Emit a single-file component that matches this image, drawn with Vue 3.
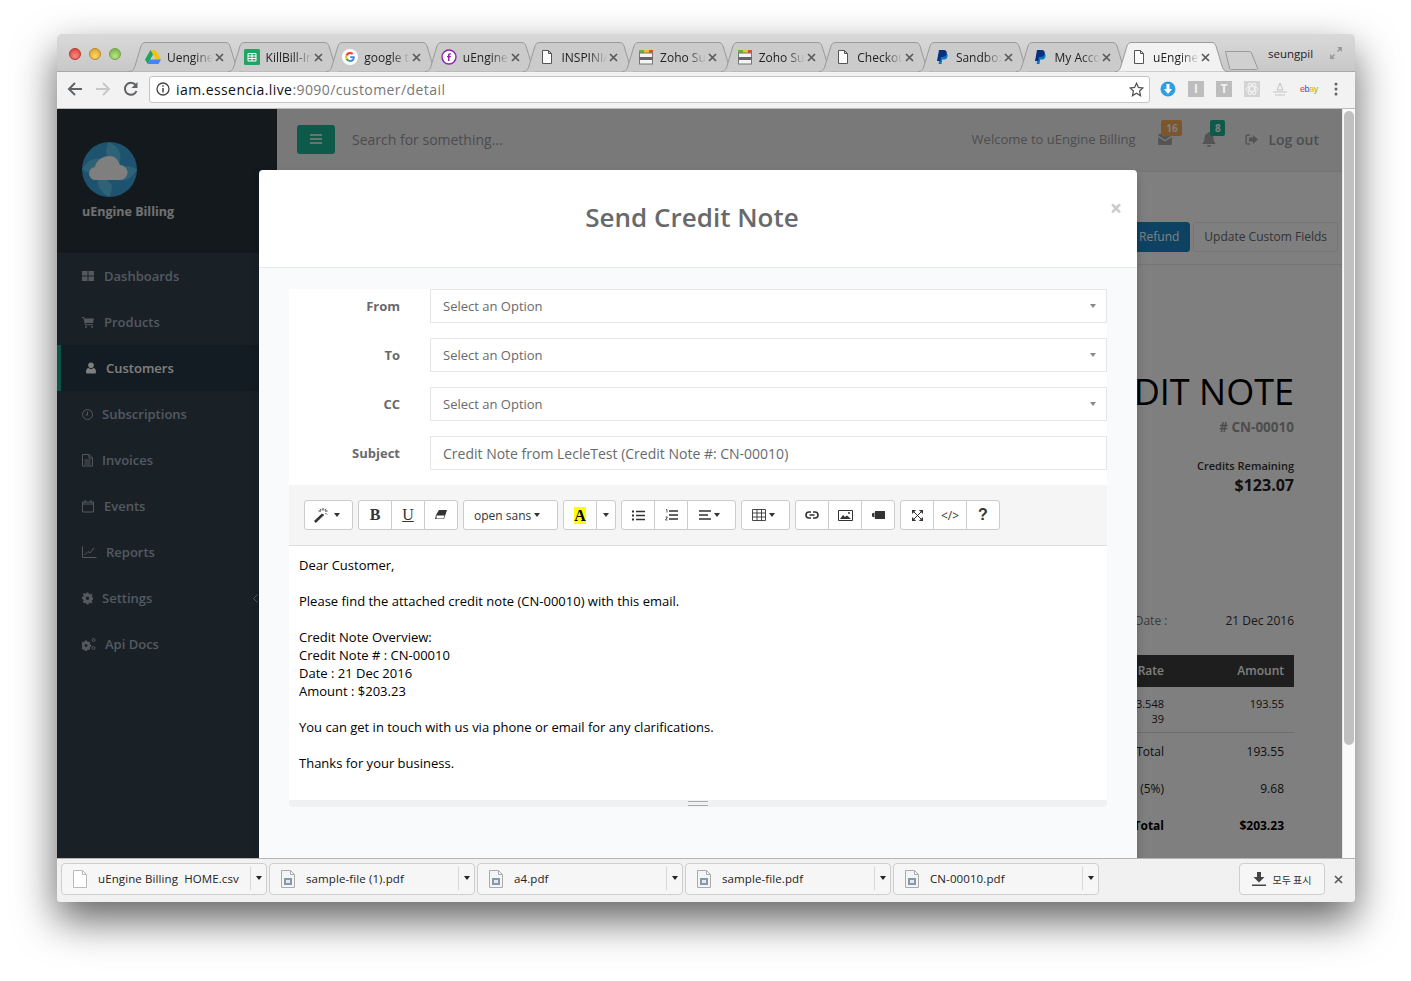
<template>
  <div class="window">
    <div class="tabstrip">
      <div class="lights">
        <span class="light red"></span>
        <span class="light yellow"></span>
        <span class="light green"></span>
      </div>
      <div class="tabs">
        <div v-for="t in tabs" :key="t.title + t.icon" class="tab" :class="{ active: t.active }">
          <svg class="tab-shape" width="113" height="30" viewBox="0 0 113 30">
            <path d="M0 29.5 C4 29.5 5 27 6 24 L12 4 C13 1.5 14 .5 17 .5 L96 .5 C99 .5 100 1.5 101 4 L107 24 C108 27 109 29.5 113 29.5" />
          </svg>
          <span class="favicon">
            <svg v-if="t.icon === 'drive'" width="16" height="16" viewBox="0 0 16 16">
              <path d="M5.5 1h5L16 10.5h-5z" fill="#f4c20d" />
              <path d="M5.5 1 8 5.4 2.7 15 0 10.5z" fill="#1fa463" />
              <path d="M5 10.5h11L13.4 15H2.7z" fill="#4285f4" />
            </svg>
            <svg v-else-if="t.icon === 'sheet'" width="16" height="16" viewBox="0 0 16 16">
              <rect width="16" height="16" rx="1.5" fill="#21a464" />
              <path d="M4 4.5h8v7.5H4zM4 7h8M4 9.5h8M8 4.5V12" fill="none" stroke="#fff" />
            </svg>
            <svg v-else-if="t.icon === 'google'" width="16" height="16" viewBox="0 0 16 16">
              <circle cx="8" cy="8" r="8" fill="#fff" />
              <path d="M12.8 8.2c0 2.8-1.9 4.8-4.7 4.8v-2c1.5 0 2.4-.8 2.7-1.9H8.1V7.3h4.6z" fill="#4285f4" />
              <path d="M8.1 13a4.9 4.9 0 0 1-4.4-2.7l1.6-1.3C5.7 10.200 6.800 11 8.100 11z" fill="#34a853" />
              <path d="M3.700 10.300a5 5 0 0 1 0-4.600l1.600 1.300a3 3 0 0 0 0 2z" fill="#fbbc05" />
              <path d="M3.700 5.700A4.900 4.900 0 0 1 11.400 4.300L10 5.700A3 3 0 0 0 5.300 7z" fill="#ea4335" />
            </svg>
            <svg v-else-if="t.icon === 'fb'" width="16" height="16" viewBox="0 0 16 16">
              <circle cx="8" cy="8" r="7" fill="#fff" stroke="#8e24aa" stroke-width="1.400" />
              <path d="M8.900 4.200c-1.300 0-1.900.7-1.900 1.900v.8H6v1.400h1V12h1.500V8.300h1.200l.2-1.400H8.500v-.6c0-.5.200-.7.700-.7h.7V4.300z" fill="#8e24aa" />
            </svg>
            <svg v-else-if="t.icon === 'doc'" width="16" height="16" viewBox="0 0 16 16">
              <path d="M3.500 1.500h6l3 3v10h-9zM9.500 1.500v3h3" fill="#fff" stroke="#555" />
            </svg>
            <svg v-else-if="t.icon === 'zoho'" width="16" height="16" viewBox="0 0 16 16">
              <path d="M1 1h5v3H1z" fill="#5fb548" />
              <path d="M6 1h5v3H6z" fill="#f2c029" />
              <path d="M11 1h4v3h-4z" fill="#e2483d" />
              <rect x="1.500" y="4" width="13" height="11" fill="#f4f4f4" stroke="#777" />
              <rect x="1.500" y="8" width="13" height="3" fill="#666" />
            </svg>
            <svg v-else width="16" height="16" viewBox="0 0 16 16">
              <path d="M6.500 4h4.500c2 0 3 1.400 2.500 3.400-.5 2.200-2 3.100-3.800 3.100H8.200L7.500 15H4.600z" fill="#0a79c4" />
              <path d="M5 1h4.500c2.500 0 3.700 1.500 3.200 3.700-.5 2.300-2 3.300-4.200 3.300H7l-.8 4H3z" fill="#0b2f7f" />
            </svg>
          </span>
          <span class="tab-title">{{ t.title }}</span>
          <svg class="tab-close" width="9" height="9" viewBox="0 0 9 9">
            <path d="M1 1l7 7M8 1 1 8" stroke="#5a5a5a" stroke-width="1.700" />
          </svg>
        </div>
        <svg class="newtab" width="34" height="20" viewBox="0 0 34 20">
          <path d="M.5 1.500h24c1 0 1.500.5 2 1.500l6 15c.3 1 0 1.500-1 1.500h-25c-1 0-1.500-.5-2-1.500L.5 1.500z" fill="#d0d0d0" stroke="#9a9a9a" />
        </svg>
      </div>
      <span class="profile">seungpil</span>
      <svg class="fullscreen" width="14" height="14" viewBox="0 0 14 14">
        <path d="M8 1h5v5zM1 8v5h5z" fill="#9a9a9a" />
        <path d="M11 3 8.500 5.500M3 11l2.500-2.500" stroke="#9a9a9a" stroke-width="1.500" />
      </svg>
    </div>

    <div class="toolbar">
      <svg class="nav-ic" width="16" height="16" viewBox="0 0 16 16">
        <path d="M15 8H2M8 2 2 8l6 6" fill="none" stroke="#5f6368" stroke-width="2" />
      </svg>
      <svg class="nav-ic" width="16" height="16" viewBox="0 0 16 16">
        <path d="M1 8h13M8 2l6 6-6 6" fill="none" stroke="#c8c8c8" stroke-width="2" />
      </svg>
      <svg class="nav-ic" width="16" height="16" viewBox="0 0 16 16">
        <path d="M13.500 10A6 6 0 1 1 12.600 4" fill="none" stroke="#5f6368" stroke-width="2" />
        <path d="M14.500 1v6h-6z" fill="#5f6368" />
      </svg>
      <div class="omnibox">
        <svg width="14" height="14" viewBox="0 0 14 14">
          <circle cx="7" cy="7" r="6" fill="none" stroke="#444" stroke-width="1.300" />
          <path d="M7 6v4.500M7 3.200v1.500" stroke="#444" stroke-width="1.500" />
        </svg>
        <span class="url"><b>iam.essencia.live</b>:9090/customer/detail</span>
        <svg class="star" width="15" height="15" viewBox="0 0 15 15">
          <path d="M7.500 1.300 9.400 5.500l4.500.5-3.300 3.100.9 4.500-4-2.300-4 2.300.9-4.500L1.100 6l4.500-.5z" fill="none" stroke="#555" stroke-width="1.300" />
        </svg>
      </div>
      <div class="extensions">
        <svg width="16" height="16" viewBox="0 0 16 16">
          <circle cx="8" cy="8" r="7.500" fill="#2e9fe0" />
          <path d="M6.500 3h3v5h2.500L8 13 4 8h2.500z" fill="#fff" />
        </svg>
        <span class="ext-box">I</span>
        <span class="ext-box">T</span>
        <svg width="16" height="16" viewBox="0 0 16 16">
          <rect width="16" height="16" fill="#d4d4d4" />
          <g fill="none" stroke="#f2f2f2">
            <ellipse cx="8" cy="8" rx="6" ry="2.500" />
            <ellipse cx="8" cy="8" rx="6" ry="2.500" transform="rotate(60 8 8)" />
            <ellipse cx="8" cy="8" rx="6" ry="2.500" transform="rotate(120 8 8)" />
          </g>
        </svg>
        <svg width="16" height="16" viewBox="0 0 16 16">
          <path d="M8 2 11 9H5z" fill="none" stroke="#c4c4c4" />
          <path d="M1 11h14M3 14h10" stroke="#c4c4c4" />
        </svg>
        <span class="ebay"><i class="e1">e</i><i class="e2">b</i><i class="e3">a</i><i class="e4">y</i></span>
        <svg class="dots" width="4" height="16" viewBox="0 0 4 16">
          <circle cx="2" cy="3" r="1.500" fill="#5f6368" />
          <circle cx="2" cy="8" r="1.500" fill="#5f6368" />
          <circle cx="2" cy="13" r="1.500" fill="#5f6368" />
        </svg>
      </div>
    </div>

    <div class="viewport-row">
      <div class="viewport">
        <div class="app">
          <aside class="sidebar">
            <div class="brand">
              <svg class="logo" width="55" height="55" viewBox="0 0 55 55">
                <circle cx="27.500" cy="27.500" r="27.500" fill="#3aa6dc" />
                <path d="M27 0c12 6 14 15 9 24L24 12C24 7 25 3 27 0z" fill="#5cc4ee" />
                <path d="M55 28c-7 11-16 13-24 8l12-12c5 0 9 1 12 4z" fill="#5cc4ee" />
                <path d="M27 55c-11-6-14-15-9-24l12 12c0 5-1 9-3 12z" fill="#5cc4ee" />
                <path d="M0 27c7-11 16-13 24-8L12 31c-5 0-9-1-12-4z" fill="#5cc4ee" />
                <path d="M14 38a6.500 6.500 0 0 1-1-13c1-6 7-11 14-11s9 4 11 9a7.500 7.500 0 0 1 0 15z" fill="#fff" />
              </svg>
              <div class="brand-name">uEngine Billing</div>
            </div>
            <nav class="menu">
              <a v-for="m in menu" :key="m.label" class="menu-item" :class="{ current: m.current }">
                <svg :width="m.w" height="14" :viewBox="`0 0 ${m.w} 14`" class="menu-ic">
                  <path v-if="m.fill" :d="m.fill" fill="currentColor" fill-rule="evenodd" />
                  <path v-if="m.line" :d="m.line" fill="none" stroke="currentColor" />
                </svg>
                {{ m.label }}
                <svg v-if="m.arrow" class="menu-arrow" width="5" height="9" viewBox="0 0 5 9">
                  <path d="M4.500 .5.500 4.500l4 4" fill="none" stroke="currentColor" />
                </svg>
              </a>
            </nav>
          </aside>

          <main class="page">
            <header class="topbar">
              <button class="burger">
                <svg width="12" height="10" viewBox="0 0 12 10">
                  <path d="M0 1h12M0 5h12M0 9h12" stroke="#fff" stroke-width="1.700" />
                </svg>
              </button>
              <span class="search">Search for something...</span>
              <span class="welcome">Welcome to uEngine Billing</span>
              <span class="top-ic mail">
                <svg width="14" height="11" viewBox="0 0 15 12">
                  <path d="M1.500 0h12c.8 0 1.500.6 1.500 1.300L7.500 6.500 0 1.300C0 .6.700 0 1.500 0zM0 3.200l7.500 5 7.500-5v7.300c0 .8-.7 1.500-1.500 1.500h-12C.7 12 0 11.300 0 10.500z" fill="#a8a8a8" />
                </svg>
                <span class="badge orange">16</span>
              </span>
              <span class="top-ic bell">
                <svg width="14" height="15" viewBox="0 0 14 15">
                  <path d="M7 0a1 1 0 0 1 1 1c2.500.5 3.500 2.500 3.500 5 0 3 1 4.500 2.500 6H0c1.500-1.500 2.500-3 2.500-6 0-2.500 1-4.500 3.500-5a1 1 0 0 1 1-1zM5 13h4a2 2 0 0 1-4 0z" fill="#a8a8a8" />
                </svg>
                <span class="badge teal">8</span>
              </span>
              <span class="logout">
                <svg width="13" height="11" viewBox="0 0 13 11">
                  <path d="M5 1H2.500C1.500 1 1 1.500 1 2.500v6C1 9.500 1.500 10 2.500 10H5" fill="none" stroke="#a8a8a8" stroke-width="1.500" />
                  <path d="M8 1l5 4.500L8 10V7.500H4v-4h4z" fill="#a8a8a8" />
                </svg>
                Log out
              </span>
            </header>
            <div class="heading">
              <button class="btn-blue">Refund</button>
              <button class="btn-plain">Update Custom Fields</button>
            </div>
            <section class="doc">
              <h1 class="doc-title">CREDIT NOTE</h1>
              <div class="doc-no"># CN-00010</div>
              <div class="doc-credit-label">Credits Remaining</div>
              <div class="doc-credit">$123.07</div>
              <div class="doc-date"><span>Credit Note Date :</span><span>21 Dec 2016</span></div>
              <div class="doc-table">
                <div class="doc-row doc-head"><span>Rate</span><span>Amount</span></div>
                <div class="doc-row doc-item"><span>193.548<br />39</span><span>193.55</span></div>
                <div class="doc-row doc-sum first"><span>Sub Total</span><span>193.55</span></div>
                <div class="doc-row doc-sum"><span>Tax (5%)</span><span>9.68</span></div>
                <div class="doc-row doc-sum strong"><span>Total</span><span>$203.23</span></div>
              </div>
            </section>
          </main>
        </div>

        <div class="backdrop">
          <div class="modal">
            <div class="modal-head">
              <h4 class="modal-title">Send Credit Note</h4>
              <span class="modal-close">×</span>
            </div>
            <div class="modal-body">
              <div class="form">
                <div v-for="f in selects" :key="f" class="form-row">
                  <label>{{ f }}</label>
                  <div class="field select">
                    Select an Option
                    <i class="select-caret"></i>
                  </div>
                </div>
                <div class="form-row">
                  <label>Subject</label>
                  <div class="field subject">Credit Note from LecleTest (Credit Note #: CN-00010)</div>
                </div>
              </div>

              <div class="editor">
                <div class="editor-bar">
                  <div class="grp">
                    <button class="wide">
                      <svg width="17" height="15" viewBox="0 0 17 15">
                        <path d="M0 13 8 5.500l1.800 1.800L1.800 15z" fill="#333" />
                        <path d="M9 0v2.500M9 6v2M4.500 3h2.500M11 3h2.500M6 .8l1.500 1.500M12 .800 10.500 2.300M13 6.500l-1.500-1.500" stroke="#333" />
                      </svg>
                      <i class="caret"></i>
                    </button>
                  </div>
                  <div class="grp">
                    <button><b class="serif">B</b></button>
                    <button><u class="serif">U</u></button>
                    <button>
                      <svg width="12" height="11" viewBox="0 0 12 11">
                        <path d="M4 0h8L9 9H0l1-4z" fill="#333" />
                        <path d="M1.500 5.500h8L8.500 8.500h-7z" fill="#fff" />
                      </svg>
                    </button>
                  </div>
                  <div class="grp">
                    <button class="font-btn">open sans <i class="caret"></i></button>
                  </div>
                  <div class="grp">
                    <button><span class="hilite">A</span></button>
                    <button class="narrow"><i class="caret"></i></button>
                  </div>
                  <div class="grp">
                    <button>
                      <svg width="13" height="11" viewBox="0 0 13 11">
                        <path d="M4 1.500h9M4 5.500h9M4 9.500h9" stroke="#333" stroke-width="1.600" />
                        <path d="M0 .500h2v2H0zM0 4.500h2v2H0zM0 8.500h2v2H0z" fill="#333" />
                      </svg>
                    </button>
                    <button>
                      <svg width="13" height="12" viewBox="0 0 13 12">
                        <path d="M4 2h9M4 6h9M4 10h9" stroke="#333" stroke-width="1.600" />
                        <path d="M1 .5h1v3M.5 8h2l-2 3h2" fill="none" stroke="#333" stroke-width=".8" />
                      </svg>
                    </button>
                    <button class="wide">
                      <svg width="12" height="10" viewBox="0 0 12 10">
                        <path d="M0 1h12M0 5h9M0 9h12" stroke="#333" stroke-width="1.600" />
                      </svg>
                      <i class="caret"></i>
                    </button>
                  </div>
                  <div class="grp">
                    <button class="wide">
                      <svg width="14" height="12" viewBox="0 0 14 12">
                        <path d="M.5.500h13v11H.5zM.5 4h13M.5 8h13M5 .5v11M9.500 .5v11" fill="none" stroke="#333" stroke-width=".9" />
                      </svg>
                      <i class="caret"></i>
                    </button>
                  </div>
                  <div class="grp">
                    <button>
                      <svg width="14" height="8" viewBox="0 0 14 8">
                        <path d="M6 1H4a3 3 0 0 0 0 6h2M8 1h2a3 3 0 0 1 0 6H8M4.500 4h5" fill="none" stroke="#333" stroke-width="1.600" />
                      </svg>
                    </button>
                    <button>
                      <svg width="15" height="11" viewBox="0 0 15 11">
                        <path d="M.5.500h14v10H.5z" fill="none" stroke="#333" />
                        <path d="M2 9l3-4 2 2 2-1.500L13 9z" fill="#333" />
                        <circle cx="11" cy="3" r="1" fill="#333" />
                      </svg>
                    </button>
                    <button>
                      <svg width="13" height="8" viewBox="0 0 13 8">
                        <path d="M3 0h10v8H3zM0 2.500l2.500-1v5l-2.500-1z" fill="#333" />
                      </svg>
                    </button>
                  </div>
                  <div class="grp">
                    <button>
                      <svg width="11" height="11" viewBox="0 0 11 11">
                        <path d="M0 0h3.500L0 3.500zM11 0v3.500L7.500 0zM0 11V7.500L3.500 11zM11 11H7.500L11 7.500zM1.500 1.500l8 8M9.500 1.500l-8 8" fill="#333" stroke="#333" />
                      </svg>
                    </button>
                    <button class="code-btn">&lt;/&gt;</button>
                    <button class="help-btn">?</button>
                  </div>
                </div>
                <div class="editor-body">
                  <p>Dear Customer,</p>
                  <p>Please find the attached credit note (CN-00010) with this email.</p>
                  <p>Credit Note Overview:<br />Credit Note # : CN-00010<br />Date : 21 Dec 2016<br />Amount : $203.23</p>
                  <p>You can get in touch with us via phone or email for any clarifications.</p>
                  <p>Thanks for your business.</p>
                </div>
                <div class="editor-grip"><span></span></div>
              </div>
            </div>
          </div>
        </div>
      </div>
      <div class="scrollbar"><span class="thumb"></span></div>
    </div>

    <div class="downloads">
      <div v-for="(d, i) in downloads" :key="d" class="dl">
        <svg v-if="i === 0" width="14" height="18" viewBox="0 0 14 18" class="dl-ic">
          <path d="M.5.5h9l4 4v13H.5zM9.500.5v4h4" fill="#fff" stroke="#bbb" />
        </svg>
        <svg v-else width="14" height="18" viewBox="0 0 14 18" class="dl-ic">
          <path d="M.5.5h9l4 4v13H.5zM9.500.5v4h4" fill="#f4f4f4" stroke="#aaa" />
          <rect x="3" y="8" width="8" height="7" fill="#8a96ac" />
          <rect x="5" y="10" width="4" height="3" fill="#e8e8e8" />
        </svg>
        <span class="dl-name">{{ d }}</span>
        <span class="dl-arrow"><i class="caret dark"></i></span>
      </div>
      <button class="show-all">
        <svg width="14" height="14" viewBox="0 0 14 14">
          <path d="M5 0h4v5h3.500L7 10.500 1.500 5H5zM0 12.500h14V14H0z" fill="#444" />
        </svg>
        모두 표시
      </button>
      <svg class="dl-close" width="9" height="9" viewBox="0 0 9 9">
        <path d="M1 1l7 7M8 1 1 8" stroke="#5a5a5a" stroke-width="1.700" />
      </svg>
    </div>
  </div>
</template>

<script setup>
const tabs = [
  { title: 'Uengine Billing', icon: 'drive' },
  { title: 'KillBill-Invoice', icon: 'sheet' },
  { title: 'google translate', icon: 'google' },
  { title: 'uEngine Facebook', icon: 'fb' },
  { title: 'INSPINIA Admin', icon: 'doc' },
  { title: 'Zoho Subscriptions', icon: 'zoho' },
  { title: 'Zoho Subscribe', icon: 'zoho' },
  { title: 'Checkout Page', icon: 'doc' },
  { title: 'Sandbox Test', icon: 'paypal' },
  { title: 'My Account', icon: 'paypal' },
  { title: 'uEngine Billing', icon: 'doc', active: true },
]

const menu = [
  { label: 'Dashboards', w: 13, fill: 'M0 2h5.500v4.500H0zM6.500 2H12v4.500H6.500zM0 7.500h5.500V12H0zM6.500 7.500H12V12H6.500z' },
  { label: 'Products', w: 13, fill: 'M0 2h2l.5 1.500H12L11 8H3.500l.3 1.300H11v1H3L1.500 3H0zM4 11a1 1 0 1 1 0 2 1 1 0 0 1 0-2zM10 11a1 1 0 1 1 0 2 1 1 0 0 1 0-2z' },
  { label: 'Customers', w: 11, current: true, fill: 'M5 1.500a2.800 2.800 0 1 1 0 5.600 2.800 2.800 0 0 1 0-5.600zM2.500 7c.7.700 1.500 1 2.500 1s1.800-.3 2.500-1C9 7.200 10 8.500 10 11c0 1-.6 1.500-1.500 1.500h-7C.6 12.500 0 12 0 11c0-2.500 1-3.800 2.500-4z' },
  { label: 'Subscriptions', w: 11, line: 'M5.500 2.500a5 5 0 1 0 0 10 5 5 0 0 0 0-10zM5.500 4.500v3.500H3.500' },
  { label: 'Invoices', w: 11, line: 'M.5 1.500h6.500l3.500 3.500v8H.5zM7 1.500v3.500h3.500M2.500 7h6M2.500 9h6M2.500 11h6' },
  { label: 'Events', w: 13, line: 'M.5 3h11v10H.5zM3 1v3M9 1v3M.5 5h11' },
  { label: 'Reports', w: 15, line: 'M.5 1.500v11h14M2.500 10l3.500-3.500 2 1.500 4-5' },
  { label: 'Settings', w: 11, arrow: true, fill: 'M4.500 1.500h2l.3 1.400 1.100.5 1.200-.8 1.400 1.400-.8 1.200.5 1.100 1.300.3v2l-1.300.3-.5 1.100.8 1.200-1.400 1.400-1.200-.8-1.100.5-.3 1.300h-2l-.3-1.300-1.100-.5-1.200.8L.9 10.700l.8-1.200-.5-1.100L0 8V6l1.200-.3.500-1.100-.8-1.200L2.300 2l1.200.8 1.100-.5zM5.500 5.500a1.700 1.700 0 1 0 0 3.400 1.700 1.700 0 0 0 0-3.400z' },
  { label: 'Api Docs', w: 14, fill: 'M3 3.500h2l.2 1 .9.400.9-.5 1.300 1.300-.5.900.4.900 1 .2v2l-1 .2-.4.900.5.900-1.300 1.300-.9-.5-.9.400-.2 1H3l-.2-1-.9-.4-.9.5L-.3 11l.5-.9-.2-.6V6.800l.2-.2-.5-.9L1 4.400l.9.5.9-.4zM4 7a1.500 1.500 0 1 0 0 3 1.500 1.500 0 0 0 0-3z', line: 'M11.500 1.500a1.500 1.500 0 1 0 0 3 1.500 1.500 0 0 0 0-3zM11.500 9.500a1.500 1.500 0 1 0 0 3 1.500 1.500 0 0 0 0-3z' },
]

const selects = ['From', 'To', 'CC']

const downloads = ['uEngine Billing  HOME.csv', 'sample-file (1).pdf', 'a4.pdf', 'sample-file.pdf', 'CN-00010.pdf']
</script>

<style>
html,
body {
  margin: 0;
  background: #fff;
}
</style>

<style scoped>
.window {
  width: 1298px;
  height: 868px;
  margin: 34px 0 79px 57px;
  display: flex;
  flex-direction: column;
  border-radius: 5px 5px 4px 4px;
  overflow: hidden;
  background: #f2f2f2;
  box-shadow: 0 18px 42px rgba(0, 0, 0, 0.62);
  font-family: "Open Sans", sans-serif;
}

/* browser chrome */
.tabstrip {
  height: 38px;
  flex: none;
  display: flex;
  align-items: flex-end;
  position: relative;
  background: linear-gradient(#d9d9d9, #c8c8c8);
  border-bottom: 1px solid #a8a8a8;
  box-sizing: border-box;
}
.lights {
  position: absolute;
  left: 12px;
  top: 14px;
  display: flex;
  gap: 8px;
}
.light {
  width: 12px;
  height: 12px;
  border-radius: 50%;
  box-sizing: border-box;
}
.light.red {
  background: radial-gradient(circle at 50% 70%, #f88, #d13a32);
  border: 1px solid #b8342c;
}
.light.yellow {
  background: radial-gradient(circle at 50% 70%, #ffd86b, #d99a1e);
  border: 1px solid #b88a24;
}
.light.green {
  background: radial-gradient(circle at 50% 70%, #b9e58b, #6cab3c);
  border: 1px solid #76a24c;
}
.tabs {
  display: flex;
  margin-left: 72px;
  margin-bottom: -1px;
  position: relative;
}
.tab {
  width: 113px;
  height: 30px;
  margin-right: -14.4px;
  padding-left: 16px;
  box-sizing: border-box;
  display: flex;
  align-items: center;
  position: relative;
  font-size: 12px;
  color: #222;
}
.tab-shape {
  position: absolute;
  left: 0;
  top: 0;
}
.tab-shape path {
  fill: #cbcbcb;
  stroke: #9a9a9a;
}
.tab.active {
  z-index: 2;
}
.tab.active .tab-shape path {
  fill: #f2f2f2;
}
.favicon {
  position: relative;
  width: 16px;
  height: 16px;
  margin-right: 6px;
  flex: none;
}
.favicon svg {
  display: block;
}
.tab-title {
  position: relative;
  width: 46px;
  overflow: hidden;
  white-space: nowrap;
  -webkit-mask-image: linear-gradient(90deg, #000 60%, transparent);
  mask-image: linear-gradient(90deg, #000 60%, transparent);
}
.tab-close {
  position: relative;
  margin-left: 2px;
}
.newtab {
  position: absolute;
  left: 1096px;
  top: 8px;
}
.profile {
  position: absolute;
  left: 1211px;
  top: 12px;
  font-size: 11.500px;
  color: #222;
}
.fullscreen {
  position: absolute;
  left: 1272px;
  top: 12px;
}
.toolbar {
  height: 37px;
  flex: none;
  display: flex;
  align-items: center;
  padding: 0 11px 2px 10px;
  box-sizing: border-box;
  background: #f2f2f2;
  border-bottom: 1px solid #bcbcbc;
  gap: 12px;
}
.nav-ic {
  flex: none;
}
.omnibox {
  width: 1001px;
  height: 27px;
  margin-left: -2px;
  flex: none;
  display: flex;
  align-items: center;
  gap: 6px;
  padding: 0 5px 0 6px;
  box-sizing: border-box;
  background: #fff;
  border: 1px solid #c4c4c4;
  border-radius: 3px;
}
.url {
  font-size: 14px;
  letter-spacing: 0.42px;
  color: #777;
  flex: 1;
}
.url b {
  font-weight: 400;
  color: #111;
}
.extensions {
  display: flex;
  align-items: center;
  gap: 12px;
  margin-left: -2px;
}
.dots {
  margin-left: 6px;
}
.ext-box {
  width: 16px;
  height: 16px;
  background: #bdbdbd;
  color: #f2f2f2;
  font-size: 12px;
  font-weight: 700;
  text-align: center;
  line-height: 16px;
}
.ebay {
  width: 16px;
  font-size: 9px;
  font-family: "Liberation Sans", sans-serif;
  letter-spacing: -0.4px;
}
.ebay i {
  font-style: normal;
}
.e1 { color: #e53238; }
.e2 { color: #0064d2; }
.e3 { color: #f5af02; }
.e4 { color: #86b817; }

/* page under the modal */
.viewport-row {
  flex: 1;
  min-height: 0;
  display: flex;
}
.viewport {
  flex: 1;
  position: relative;
  overflow: hidden;
}
.app {
  display: flex;
  height: 100%;
  background: #fff;
}
.sidebar {
  width: 220px;
  flex: none;
  background: #33424e;
}
.brand {
  height: 144px;
  box-sizing: border-box;
  padding: 33px 25px 0;
  background: #28333d;
}
.logo {
  display: block;
}
.brand-name {
  margin-top: 6px;
  font-size: 12.500px;
  font-weight: 700;
  line-height: 18px;
  color: #e2e2e2;
}
.menu {
  display: flex;
  flex-direction: column;
}
.menu-item {
  height: 46px;
  padding-left: 25px;
  display: flex;
  align-items: center;
  gap: 9px;
  font-size: 13px;
  font-weight: 600;
  color: #a7b1c2;
  position: relative;
}
.menu-item.current {
  background: #293846;
  color: #fff;
  border-left: 4px solid #19aa8d;
  box-sizing: border-box;
}
.menu-ic {
  flex: none;
}
.menu-arrow {
  position: absolute;
  left: 196px;
  top: 19px;
}
.page {
  flex: 1;
  min-width: 0;
}
.topbar {
  height: 63px;
  box-sizing: border-box;
  display: flex;
  align-items: center;
  padding: 0 23px 2px 20px;
  background: #f3f3f4;
  border-bottom: 1px solid #e7eaec;
  font-size: 13px;
  color: #999c9e;
}
.burger {
  width: 38px;
  height: 29px;
  padding: 0;
  border: none;
  border-radius: 3px;
  background: #1ab394;
}
.burger svg {
  display: block;
  margin: 0 auto;
}
.search {
  margin-left: 17px;
  font-size: 14px;
  color: #999;
  flex: 1;
}
.welcome {
  color: #999c9e;
  font-size: 13px;
}
.top-ic {
  position: relative;
  margin-left: 23px;
  width: 15px;
  height: 15px;
  display: block;
}
.top-ic svg {
  display: block;
}
.mail svg {
  margin-top: 2px;
}
.bell {
  margin-left: 29px;
}
.badge {
  position: absolute;
  top: -12px;
  height: 16px;
  line-height: 16px;
  border-radius: 2px;
  font-size: 10px;
  font-weight: 700;
  text-align: center;
  color: #fff;
}
.badge.orange {
  left: 3px;
  width: 21px;
  background: #f8ac59;
}
.badge.teal {
  left: 8px;
  width: 15px;
  background: #1ab394;
}
.logout {
  margin-left: 28px;
  display: flex;
  align-items: center;
  gap: 10px;
  font-size: 14px;
  font-weight: 600;
}
.heading {
  height: 93px;
  box-sizing: border-box;
  padding: 50px 4px 0 0;
  display: flex;
  justify-content: flex-end;
  align-items: flex-start;
  gap: 3px;
  background: #fff;
  border-bottom: 1px solid #e7eaec;
}
.heading button {
  height: 30px;
  border-radius: 3px;
  font-family: inherit;
  font-size: 12px;
  padding: 0 10px 2px;
  box-sizing: border-box;
}
.btn-blue {
  border: 1px solid #1c84c6;
  background: #1c84c6;
  color: #fff;
}
.btn-plain {
  border: 1px solid #e7eaec;
  background: #fff;
  color: #676a6c;
}
.doc {
  padding: 0 48px 0 0;
  text-align: right;
  background: #fff;
  height: 593px;
  box-sizing: border-box;
  color: #676a6c;
  font-size: 12px;
}
.doc-title {
  margin: 0;
  padding-top: 102px;
  font-size: 36px;
  font-weight: 400;
  line-height: 50px;
  color: #000;
}
.doc-no {
  margin-top: 0;
  font-size: 13.500px;
  font-weight: 700;
  line-height: 20px;
  color: #9b9b9b;
}
.doc-credit-label {
  margin-top: 21px;
  font-size: 11px;
  font-weight: 600;
  line-height: 16px;
  color: #333;
}
.doc-credit {
  font-size: 16px;
  font-weight: 700;
  line-height: 22px;
  color: #222;
}
.doc-date {
  margin-top: 116px;
  display: flex;
  justify-content: flex-end;
  gap: 58px;
  line-height: 18px;
  color: #333;
}
.doc-date span:first-child {
  color: #777;
}
.doc-table {
  margin-top: 25px;
  color: #222;
}
.doc-row {
  display: flex;
  justify-content: flex-end;
  text-align: right;
  padding-right: 10px;
}
.doc-row span:first-child {
  width: 200px;
}
.doc-row span:last-child {
  width: 120px;
}
.doc-head {
  height: 32px;
  align-items: center;
  padding-bottom: 1px;
  box-sizing: border-box;
  background: #3c3c3c;
  color: #fff;
  font-weight: 600;
  font-size: 12px;
}
.doc-item {
  height: 46px;
  box-sizing: border-box;
  padding-top: 9px;
  font-size: 11px;
  line-height: 15px;
  border-bottom: 1px solid #ddd;
}
.doc-sum {
  height: 37px;
  align-items: center;
}
.doc-sum.strong {
  font-weight: 700;
  color: #000;
}

/* modal */
.backdrop {
  position: absolute;
  inset: 0;
  background: rgba(0, 0, 0, 0.5);
}
.modal {
  position: absolute;
  left: 202px;
  top: 61px;
  width: 878px;
  background: #fff;
  border-radius: 4px 4px 0 0;
  box-shadow: 0 5px 10px rgba(0, 0, 0, 0.2);
}
.modal-head {
  height: 98px;
  box-sizing: border-box;
  position: relative;
  border-bottom: 1px solid #e7eaec;
  text-align: center;
  padding-right: 12px;
}
.modal-title {
  margin: 0;
  padding-top: 29px;
  font-size: 26px;
  font-weight: 600;
  line-height: 36px;
  color: #676a6c;
}
.modal-close {
  position: absolute;
  right: 15px;
  top: 26px;
  font-size: 21px;
  font-weight: 700;
  line-height: 24px;
  color: #c9c9c9;
}
.modal-body {
  padding: 21px 30px 60px;
  background: #f8fafb;
}
.form {
  background: #fff;
}
.form-row {
  display: flex;
  gap: 30px;
  padding-bottom: 15px;
}
.form-row label {
  width: 111px;
  text-align: right;
  font-size: 13px;
  font-weight: 700;
  line-height: 34px;
  color: #676a6c;
}
.field {
  flex: 1;
  height: 34px;
  box-sizing: border-box;
  padding: 0 12px;
  border: 1px solid #e5e6e7;
  font-size: 13px;
  line-height: 32px;
  color: #676a6c;
  position: relative;
}
.select-caret {
  position: absolute;
  right: 10px;
  top: 14px;
  border: 3.500px solid transparent;
  border-top: 4px solid #888;
  border-bottom: 0;
}
.subject {
  font-size: 14px;
  line-height: 34px;
}
.editor {
  border-radius: 0 0 4px 4px;
  background: #fff;
}
.editor-bar {
  height: 61px;
  box-sizing: border-box;
  padding: 15px;
  display: flex;
  gap: 5px;
  background: #f5f5f5;
  border-bottom: 1px solid #ddd;
}
.grp {
  display: flex;
}
.grp button {
  height: 28px;
  width: 32px;
  margin-left: -1px;
  padding: 0;
  box-sizing: content-box;
  background: #fff;
  border: 1px solid #ccc;
  color: #333;
  display: flex;
  align-items: center;
  justify-content: center;
  gap: 3px;
  font-family: inherit;
  font-size: 12px;
}
.grp button:first-child {
  margin-left: 0;
  border-radius: 3px 0 0 3px;
}
.grp button:last-child {
  border-radius: 0 3px 3px 0;
}
.grp button:only-child {
  border-radius: 3px;
}
.grp button.wide {
  width: 43px;
  padding-right: 4px;
}
.grp button.narrow {
  width: 18px;
}
.caret {
  display: inline-block;
  border: 3px solid transparent;
  border-top: 4px solid #333;
  border-bottom: 0;
}
.serif {
  font-family: "Liberation Serif", serif;
  font-size: 16px;
}
.grp button.font-btn {
  width: 83px;
  padding-left: 10px;
  justify-content: flex-start;
}
.hilite {
  width: 12px;
  height: 17px;
  background: #ff0;
  font-family: "Liberation Serif", serif;
  font-weight: 700;
  font-size: 16px;
  line-height: 17px;
  text-align: center;
  color: #000;
}
.grp button.code-btn {
  font-size: 12px;
}
.grp button.help-btn {
  font-family: "Liberation Sans", sans-serif;
  font-size: 16px;
  font-weight: 700;
}
.editor-body {
  height: 254px;
  box-sizing: border-box;
  padding: 10px 10px 0;
  font-size: 13px;
  line-height: 18px;
  color: #000;
}
.editor-body p {
  margin: 0 0 18px;
}
.editor-grip {
  height: 7px;
  background: #f0f1f2;
  border-radius: 0 0 4px 4px;
  display: flex;
  justify-content: center;
  align-items: center;
}
.editor-grip span {
  width: 20px;
  height: 3px;
  border-top: 1px solid #a8a8a8;
  border-bottom: 1px solid #a8a8a8;
}
.scrollbar {
  width: 13px;
  flex: none;
  background: #fafafa;
  border-left: 1px solid #e8e8e8;
  box-sizing: border-box;
  padding: 2px 1px 0 1px;
}
.thumb {
  display: block;
  width: 10px;
  height: 634px;
  border-radius: 5px;
  background: #c0c0c0;
}

/* download shelf */
.downloads {
  height: 44px;
  flex: none;
  box-sizing: border-box;
  display: flex;
  align-items: center;
  gap: 2px;
  padding: 0 0 3px 4px;
  background: #f1f1f1;
  border-top: 1px solid #b4b4b4;
  position: relative;
}
.dl {
  width: 206px;
  height: 32px;
  box-sizing: border-box;
  display: flex;
  align-items: center;
  border: 1px solid #cfcfcf;
  border-radius: 4px;
  background: #f6f6f6;
  padding: 0 0 1px 11px;
}
.dl-ic {
  flex: none;
}
.dl-name {
  margin-left: 11px;
  flex: 1;
  font-size: 11.500px;
  letter-spacing: 0.1px;
  color: #222;
  white-space: pre;
}
.dl-arrow {
  width: 15px;
  height: 24px;
  flex: none;
  display: flex;
  align-items: center;
  justify-content: center;
  border-left: 1px solid #d8d8d8;
  margin-bottom: 1px;
}
.caret.dark {
  border-top-color: #222;
}
.show-all {
  position: absolute;
  left: 1182px;
  top: 4px;
  width: 86px;
  height: 32px;
  display: flex;
  align-items: center;
  justify-content: center;
  gap: 6px;
  padding: 0;
  border: 1px solid #cfcfcf;
  border-radius: 4px;
  background: #f6f6f6;
  font-family: "Noto Sans CJK KR", sans-serif;
  font-size: 10px;
  color: #333;
}
.dl-close {
  position: absolute;
  left: 1277px;
  top: 16px;
}
</style>
